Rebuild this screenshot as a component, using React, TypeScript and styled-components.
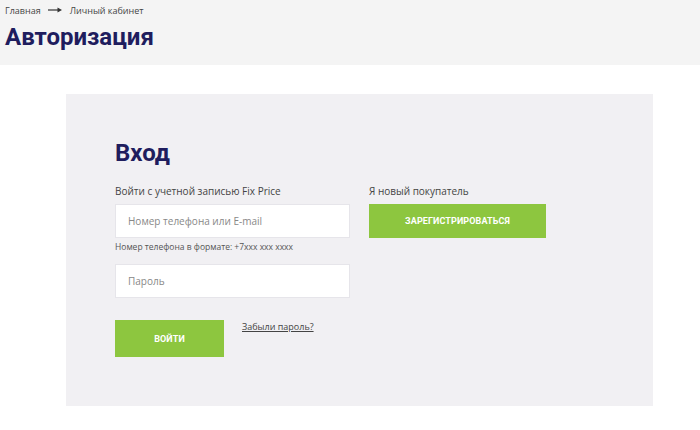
import React from "react";
import styled, { createGlobalStyle } from "styled-components";

const GlobalStyle = createGlobalStyle`
  html, body {
    margin: 0;
    padding: 0;
    background: #fff;
  }
  * {
    box-sizing: border-box;
  }
`;

const Page = styled.div`
  width: 700px;
  height: 430px;
  font-family: "Open Sans", "Liberation Sans", sans-serif;
  color: #333;
  overflow: hidden;
`;

const Header = styled.header`
  background: #f4f4f4;
  height: 65px;
  padding: 4px 0 0 5px;
`;

const Breadcrumbs = styled.nav`
  display: flex;
  align-items: center;
  gap: 7px;
  font-size: 9px;
  color: #444;
  height: 12px;

  .arrow {
    display: inline-flex;
    align-items: center;
    width: 15px;
  }
`;

const Title = styled.h1`
  margin: 7px 0 0;
  font-family: Roboto, "Liberation Sans", sans-serif;
  font-weight: 700;
  font-size: 24px;
  line-height: 28px;
  color: #1f1d5e;
`;

const Main = styled.main`
  padding: 29px 47px 0 66px;
`;

const Panel = styled.section`
  background: #f1f0f3;
  height: 312px;
  padding: 45px 49px 0;
`;

const Heading = styled.h2`
  margin: 0;
  font-family: Roboto, "Liberation Sans", sans-serif;
  font-weight: 700;
  font-size: 24px;
  line-height: 28px;
  color: #1f1d5e;
`;

const Columns = styled.div`
  display: grid;
  grid-template-columns: 235px 177px;
  column-gap: 19px;
  margin-top: 17px;
`;

const Column = styled.div`
  display: flex;
  flex-direction: column;
`;

const Label = styled.div`
  font-size: 10px;
  line-height: 14px;
  color: #444;
  margin-bottom: 6px;
`;

const Input = styled.input`
  width: 235px;
  height: 34px;
  border: 1px solid #e6e5ea;
  background: #fff;
  padding: 0 12px;
  font-family: "Open Sans", "Liberation Sans", sans-serif;
  font-size: 10px;
  color: #333;
  outline: none;

  &::placeholder {
    color: #888;
  }
`;

const Hint = styled.div`
  font-size: 8.5px;
  line-height: 12px;
  color: #555;
  margin: 3px 0 11px;
`;

const Actions = styled.div`
  display: flex;
  align-items: flex-start;
  gap: 18px;
  margin-top: 22px;
`;

const GreenButton = styled.button<{ $w: number; $h: number }>`
  width: ${(p) => p.$w}px;
  height: ${(p) => p.$h}px;
  border: none;
  background: #8dc63f;
  color: #fff;
  font-family: Roboto, "Liberation Sans", sans-serif;
  font-weight: 700;
  font-size: 9px;
  text-transform: uppercase;
  letter-spacing: 0.1px;
  cursor: pointer;
`;

const Forgot = styled.a`
  font-size: 9px;
  color: #444;
  text-decoration: underline;
  margin-top: 0;
  cursor: pointer;
`;

export default function App() {
  return (
    <Page>
      <GlobalStyle />
      <Header>
        <Breadcrumbs>
          <span>Главная</span>
          <span className="arrow">
            <svg width="14" height="6" viewBox="0 0 14 6">
              <path d="M0 3h10" stroke="#333" strokeWidth="1.2" />
              <path d="M9.5 0.5L14 3L9.5 5.5Z" fill="#333" />
            </svg>
          </span>
          <span>Личный кабинет</span>
        </Breadcrumbs>
        <Title>Авторизация</Title>
      </Header>
      <Main>
        <Panel>
          <Heading>Вход</Heading>
          <Columns>
            <Column>
              <Label>Войти с учетной записью Fix Price</Label>
              <Input placeholder="Номер телефона или E-mail" />
              <Hint>Номер телефона в формате: +7xxx xxx xxxx</Hint>
              <Input type="password" placeholder="Пароль" />
              <Actions>
                <GreenButton $w={109} $h={37}>Войти</GreenButton>
                <Forgot>Забыли пароль?</Forgot>
              </Actions>
            </Column>
            <Column>
              <Label>Я новый покупатель</Label>
              <GreenButton $w={177} $h={34}>Зарегистрироваться</GreenButton>
            </Column>
          </Columns>
        </Panel>
      </Main>
    </Page>
  );
}
